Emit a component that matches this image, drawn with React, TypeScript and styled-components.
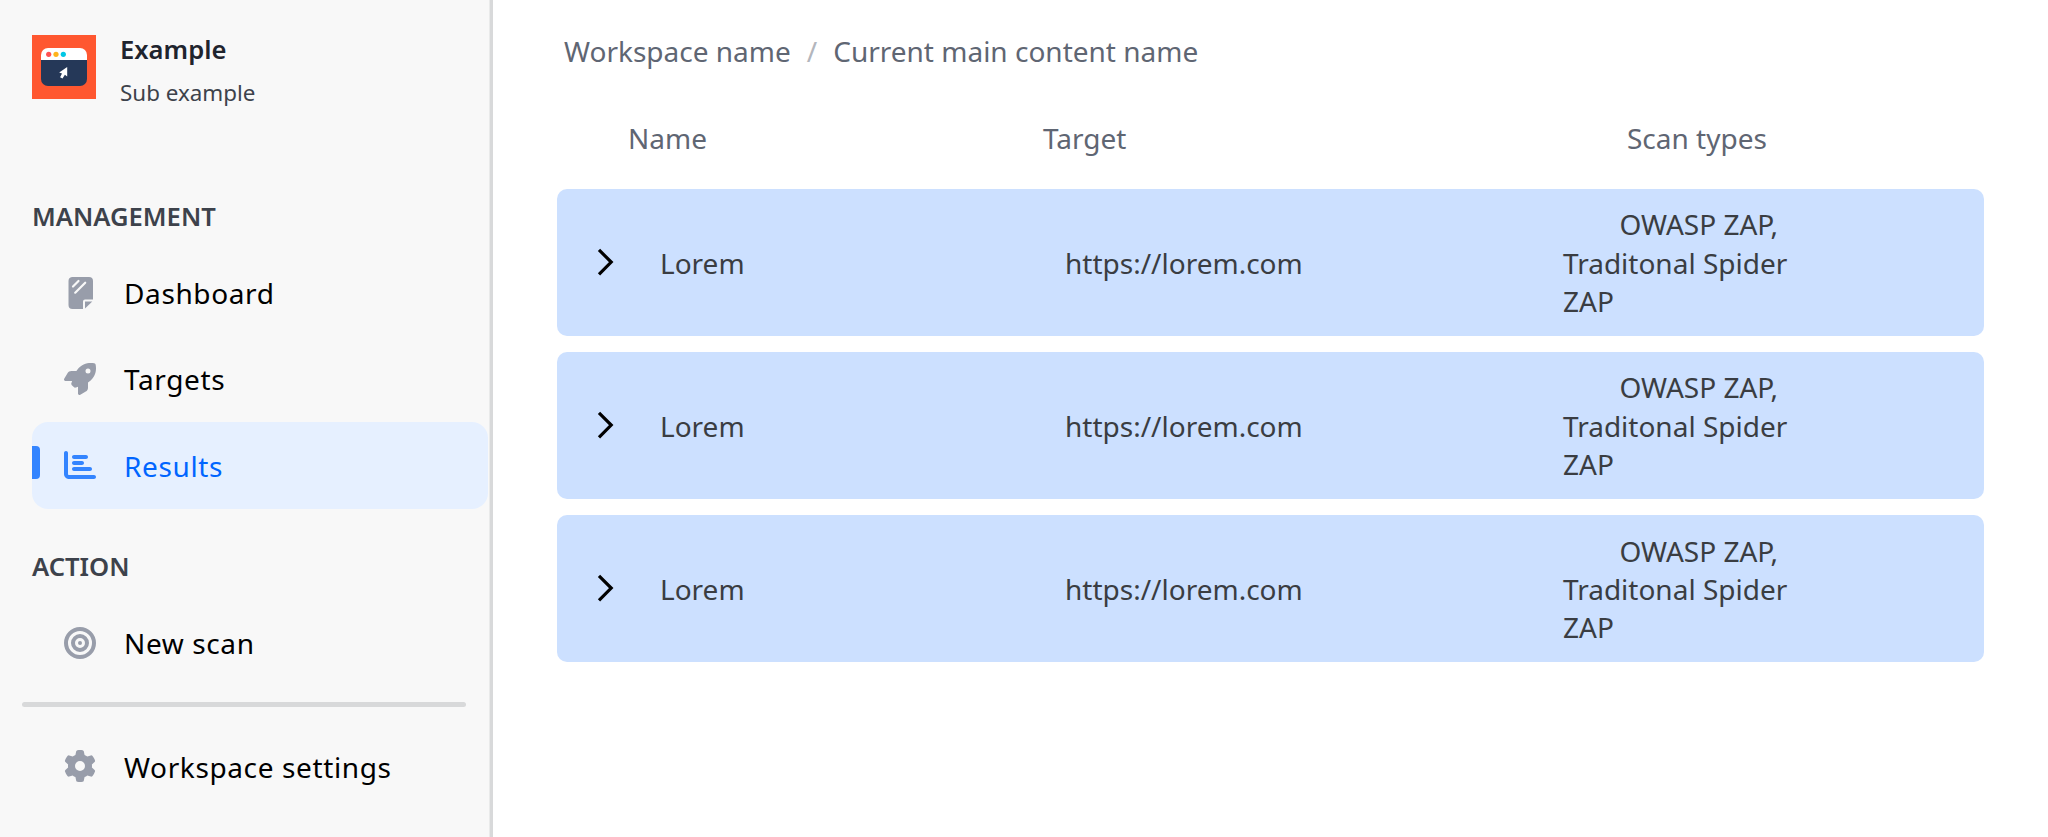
import React from 'react';
import styled, { createGlobalStyle } from 'styled-components';
import { FaBullseye, FaChartBar, FaGear, FaRocket } from 'react-icons/fa6';

const GlobalStyle = createGlobalStyle`
  *, *::before, *::after { box-sizing: border-box; }
  html, body { margin: 0; background: #fff; overflow: hidden; }
  body { font-family: 'Noto Sans', 'Open Sans', sans-serif; font-size: 28px; line-height: 38px; }
`;

const Layout = styled.div`
  display: flex;
  width: 2048px;
  height: 837px;
  overflow: hidden;
`;

const Sidebar = styled.aside`
  display: flex;
  flex-direction: column;
  width: 493px;
  flex-shrink: 0;
  background: #f8f8f8;
  border-right: 3px solid #d8d9da;
  box-shadow: inset -1px 0 0 #e9eaea;
`;

const Brand = styled.header`
  display: flex;
  gap: 24px;
  padding: 35px 0 0 32px;
  height: 195px;
`;

const BrandText = styled.div`
  display: flex;
  flex-direction: column;
  gap: 13px;
  margin-top: -1px;
`;

const BrandName = styled.strong`
  font-size: 25.6px;
  font-weight: 600;
  line-height: 31px;
  color: #1f242e;
`;

const BrandSub = styled.span`
  font-size: 22.4px;
  line-height: 30px;
  color: #3d424b;
`;

const SectionTitle = styled.h2<{ $spaced?: boolean }>`
  margin: ${p => (p.$spaced ? '37.3px' : '1px')} 0 0 32px;
  height: 53.8px;
  font-size: 25.6px;
  font-weight: 600;
  line-height: 42px;
  color: #3d424b;
`;

const Nav = styled.nav`
  display: flex;
  flex-direction: column;
  margin: 0 2px 0 32px;
`;

const NavItem = styled.a<{ $active?: boolean }>`
  position: relative;
  display: flex;
  align-items: center;
  gap: 28px;
  height: 86.3px;
  padding-left: 32px;
  border-radius: 16px;
  letter-spacing: 0.62px;
  color: ${p => (p.$active ? '#0065ff' : '#000')};
  background: ${p => (p.$active ? '#e6f0ff' : 'transparent')};

  svg {
    width: 32px;
    height: 32px;
    margin-top: -0.3px;
    color: ${p => (p.$active ? '#3384ff' : '#989daa')};
  }
`;

const ActiveMark = styled.span`
  position: absolute;
  left: 0;
  top: 24px;
  width: 8px;
  height: 32.4px;
  border-radius: 0 4px 4px 0;
  background: #3384ff;
`;

const Divider = styled.hr`
  width: 444px;
  height: 5px;
  margin: 16px 0 16.3px 22px;
  border: 0;
  border-radius: 2.5px;
  background: #d8d9da;
`;

const Main = styled.main`
  flex: 1;
  padding: 32px 64px 0;
`;

const Breadcrumb = styled.div`
  display: flex;
  gap: 16px;
  padding-left: 7px;
  color: #5f6673;
`;

const Slash = styled.span`
  color: #b3b6bd;
`;

const TableHead = styled.div`
  display: grid;
  grid-template-columns: 415px 584px 1fr;
  margin-top: 49px;
  padding-left: 71px;
  color: #5f6673;
`;

const Rows = styled.div`
  display: flex;
  flex-direction: column;
  gap: 16px;
  margin-top: 32px;
`;

const Row = styled.div`
  display: grid;
  grid-template-columns: 66px 405px 498px 240px;
  align-items: center;
  height: 147.15px;
  padding-left: 37px;
  border-radius: 10px;
  background: #cce0ff;
  color: #3a3d42;
`;

const Chevron = styled.svg`
  display: block;
  width: 22px;
  height: 32px;
  margin-top: -1px;
`;

const ScanTypes = styled.div`
  align-self: start;
  padding-top: 16.3px;
  text-indent: 56.4px;
  line-height: 38.3px;
`;

const Logo = () => (
  <svg width="64" height="64" viewBox="0 0 64 64">
    <rect width="64" height="64" fill="#ff5730" />
    <path d="M9 25V20a7 7 0 0 1 7-7H48a7 7 0 0 1 7 7V25z" fill="#fff" />
    <path d="M9 25H55V44a7 7 0 0 1-7 7H16a7 7 0 0 1-7-7z" fill="#253858" />
    <circle cx="16.7" cy="19.3" r="2.6" fill="#ff5252" />
    <circle cx="24" cy="19.3" r="2.6" fill="#ffb31a" />
    <circle cx="31.3" cy="19.3" r="2.6" fill="#00c7e5" />
    <path d="M35.2 32V41.6L32.9 39.8 30.5 43.6 28.1 42.2 30 38.6 27.2 37.5z" fill="#fff" />
  </svg>
);

const DashboardIcon = () => (
  <svg viewBox="0 0 32 32">
    <path
      d="M8 0H25a4 4 0 0 1 4 4V22.5H21a2 2 0 0 0-2 2V32H8.500a4 4 0 0 1-4-4V4A4 4 0 0 1 8 0z"
      fill="currentColor"
    />
    <path d="M21 31.500V24.500H28.300z" fill="currentColor" />
    <path d="M9 9.500L14.500 4M11.200 15.700L21.200 5.700" stroke="#f8f8f8" strokeWidth="2.2" strokeLinecap="round" />
  </svg>
);

const scans = [1, 2, 3].map(id => ({
  id,
  name: 'Lorem',
  target: 'https://lorem.com',
  types: 'OWASP ZAP, Traditonal Spider ZAP',
}));

export default function App() {
  return (
    <>
      <GlobalStyle />
      <Layout>
        <Sidebar>
          <Brand>
            <Logo />
            <BrandText>
              <BrandName>Example</BrandName>
              <BrandSub>Sub example</BrandSub>
            </BrandText>
          </Brand>
          <SectionTitle>MANAGEMENT</SectionTitle>
          <Nav>
            <NavItem><DashboardIcon />Dashboard</NavItem>
            <NavItem><FaRocket />Targets</NavItem>
            <NavItem $active><ActiveMark /><FaChartBar />Results</NavItem>
          </Nav>
          <SectionTitle $spaced>ACTION</SectionTitle>
          <Nav>
            <NavItem><FaBullseye />New scan</NavItem>
          </Nav>
          <Divider />
          <Nav>
            <NavItem><FaGear />Workspace settings</NavItem>
          </Nav>
        </Sidebar>
        <Main>
          <Breadcrumb>
            <span>Workspace name</span>
            <Slash>/</Slash>
            <span>Current main content name</span>
          </Breadcrumb>
          <TableHead>
            <span>Name</span>
            <span>Target</span>
            <span>Scan types</span>
          </TableHead>
          <Rows>
            {scans.map(scan => (
              <Row key={scan.id}>
                <Chevron viewBox="0 0 22 32">
                  <path d="M5 3.900L17.200 16.100 5 28.300" fill="none" stroke="#000" strokeWidth="3.2" />
                </Chevron>
                <span>{scan.name}</span>
                <span>{scan.target}</span>
                <ScanTypes>{scan.types}</ScanTypes>
              </Row>
            ))}
          </Rows>
        </Main>
      </Layout>
    </>
  );
}
